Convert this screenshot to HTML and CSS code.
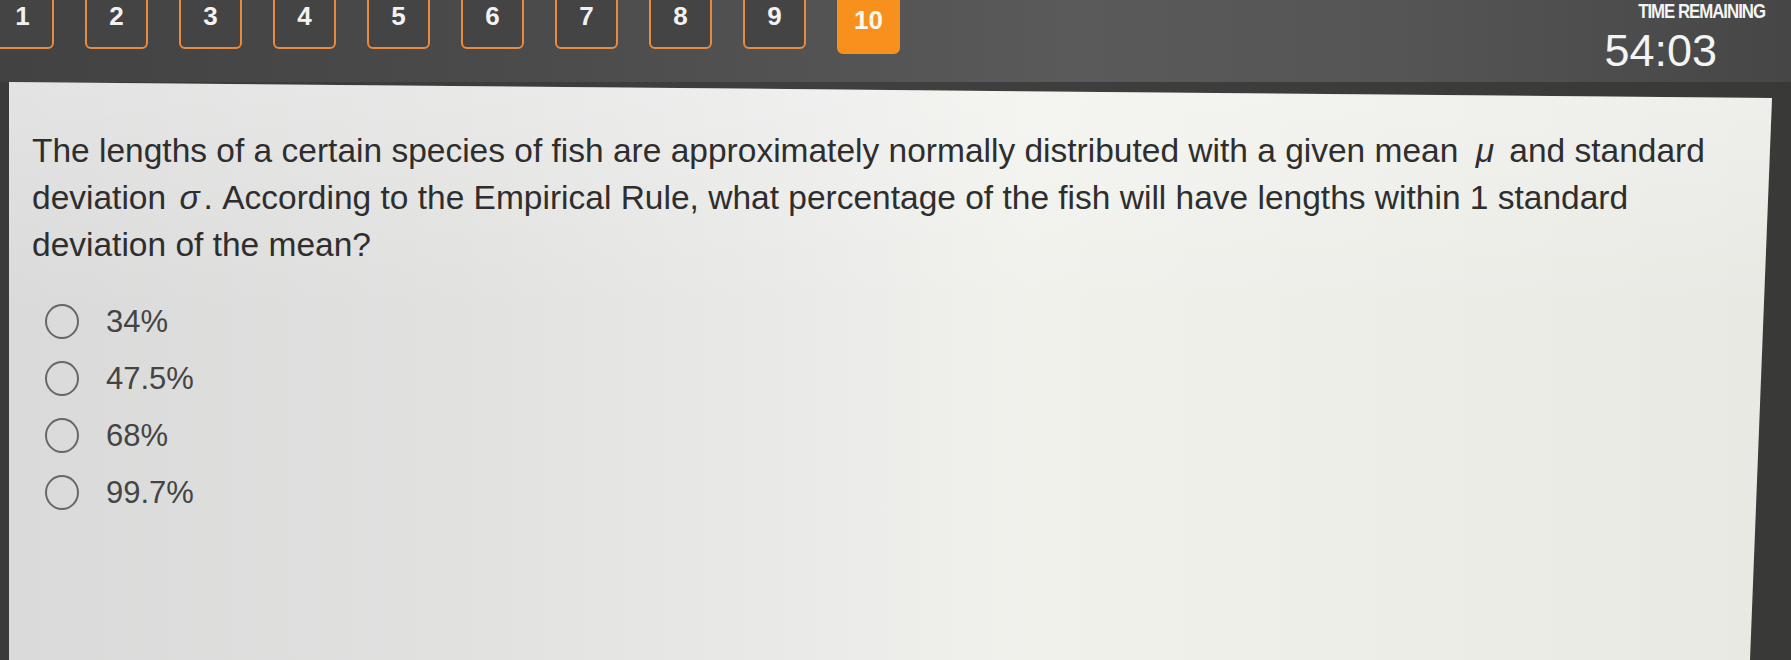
FILE: index.html
```html
<!DOCTYPE html>
<html lang="en">
<head>
<meta charset="utf-8">
<title>Quiz</title>
<link rel="stylesheet" href="styles.css">
</head>
<body>
<header class="topbar">
  <nav class="qnav">
    <span class="qbtn">1</span>
    <span class="qbtn">2</span>
    <span class="qbtn">3</span>
    <span class="qbtn">4</span>
    <span class="qbtn">5</span>
    <span class="qbtn">6</span>
    <span class="qbtn">7</span>
    <span class="qbtn">8</span>
    <span class="qbtn">9</span>
    <span class="qbtn qbtn-current">10</span>
  </nav>
  <div class="timer">
    <div class="timer-label">TIME REMAINING</div>
    <div class="timer-value">54:03</div>
  </div>
</header>
<main class="panel">
  <p class="question">The lengths of a certain species of fish are approximately normally distributed with a given mean <span class="math">μ</span> and standard deviation <span class="math math-sigma">σ</span>. According to the Empirical Rule, what percentage of the fish will have lengths within 1 standard deviation of the mean?</p>
  <ul class="options">
    <li class="option"><span class="radio"></span><span class="option-text">34%</span></li>
    <li class="option"><span class="radio"></span><span class="option-text">47.5%</span></li>
    <li class="option"><span class="radio"></span><span class="option-text">68%</span></li>
    <li class="option"><span class="radio"></span><span class="option-text">99.7%</span></li>
  </ul>
</main>
</body>
</html>
```
FILE: styles.css
```css
html, body {
  margin: 0;
  padding: 0;
}
body {
  width: 1791px;
  height: 660px;
  overflow: hidden;
  background: linear-gradient(90deg, #3a3a3a 0%, #3f3f3f 50%, #393937 100%);
  font-family: "Liberation Sans", Arial, Helvetica, sans-serif;
}
.topbar {
  height: 82px;
  display: flex;
  justify-content: space-between;
  align-items: flex-start;
  background: linear-gradient(90deg, #424242 0%, #4b4b4b 30%, #5a5a5a 60%, #555555 78%, #464646 100%);
}
.qnav {
  display: flex;
  align-items: flex-start;
  gap: 31px;
  margin-left: -9px;
  margin-top: -8px;
}
.qbtn {
  box-sizing: border-box;
  width: 63px;
  height: 57px;
  border: 2px solid #ea8a3e;
  border-radius: 6px;
  display: flex;
  align-items: center;
  justify-content: center;
  padding-bottom: 8px;
  color: #f2f2f2;
  font-size: 26px;
  font-weight: bold;
  background: #444444;
}
.qbtn-current {
  height: 62px;
  background: #f7901c;
  border-color: #f7901c;
  color: #fff8ee;
  padding-bottom: 6px;
}
.timer {
  display: flex;
  flex-direction: column;
  align-items: flex-end;
  margin-right: 26px;
  color: #f4f4f4;
}
.timer-label {
  font-size: 20px;
  font-weight: bold;
  letter-spacing: -1.2px;
  line-height: 20px;
  padding-top: 1px;
  transform: scaleX(0.84);
  transform-origin: right center;
}
.timer-value {
  font-size: 45px;
  line-height: 44px;
  margin-top: 8px;
  margin-right: 48px;
}
.panel {
  display: block;
  box-sizing: border-box;
  margin-left: 9px;
  width: 1763px;
  height: 578px;
  padding: 45px 40px 0 23px;
  background:
    linear-gradient(180deg, rgba(255,255,255,0.25) 0%, rgba(255,255,255,0) 40%),
    linear-gradient(90deg, #dadada 0%, #e1e1e0 25%, #eaeae9 45%, #f1f1ec 58%, #eeeee9 75%, #e9e9e4 100%);
  clip-path: polygon(0 0, 100% 16px, calc(100% - 22px) 100%, 0 100%);
}
.question {
  margin: 0;
  font-size: 33.5px;
  line-height: 47px;
  color: #2e2e2e;
}
.math {
  font-style: italic;
  margin: 0 6px 0 8px;
}
.math-sigma {
  margin: 0 4px 0 4px;
}
.options {
  list-style: none;
  margin: 25px 0 0;
  padding: 0 0 0 13px;
}
.option {
  display: flex;
  align-items: center;
  height: 57px;
  gap: 27px;
}
.radio {
  box-sizing: border-box;
  width: 34px;
  height: 35px;
  border: 2.5px solid #676767;
  border-radius: 50%;
  flex: none;
}
.option-text {
  font-size: 31px;
  color: #444444;
}
```
